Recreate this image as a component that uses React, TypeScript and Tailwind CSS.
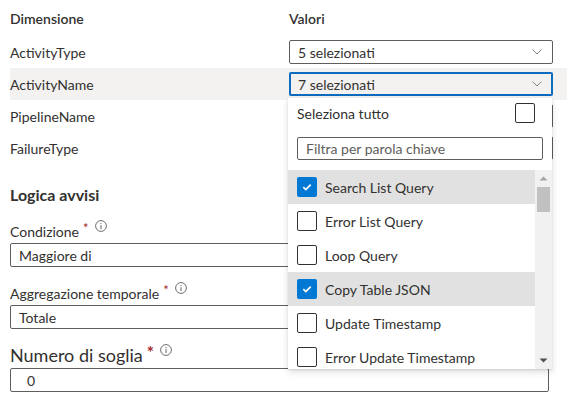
import React from 'react';

const dims = ['ActivityType', 'ActivityName', 'PipelineName', 'FailureType'];

const items = [
  { label: 'Search List Query', checked: true },
  { label: 'Error List Query', checked: false },
  { label: 'Loop Query', checked: false },
  { label: 'Copy Table JSON', checked: true },
  { label: 'Update Timestamp', checked: false },
  { label: 'Error Update Timestamp', checked: false },
];

const Chevron = () => (
  <svg width="10" height="6" viewBox="0 0 10 6" fill="none" className="shrink-0">
    <path d="M0.5 0.5 L5 5 L9.5 0.5" stroke="#8a8886" strokeWidth="1" />
  </svg>
);

const InfoIcon = () => (
  <svg width="12" height="12" viewBox="0 0 12 12" fill="none" className="ml-[6px] -translate-y-[5px] shrink-0">
    <circle cx="6" cy="6" r="5.4" stroke="#605e5c" strokeWidth="0.9" />
    <path d="M6 5.2 V9" stroke="#605e5c" strokeWidth="1" />
    <circle cx="6" cy="3.6" r="0.6" fill="#605e5c" />
  </svg>
);

const Required = ({ big }: { big?: boolean }) => (
  <span
    className={
      big
        ? 'text-[#a4262c] text-[17px] font-bold leading-none ml-[4px] -translate-y-[3px]'
        : 'text-[#a4262c] text-[13px] leading-none ml-[4px] -translate-y-[3px]'
    }
  >
    *
  </span>
);

const Checkbox = ({ checked }: { checked: boolean }) =>
  checked ? (
    <div className="w-5 h-5 rounded-[2px] bg-[#0078d4] flex items-center justify-center shrink-0">
      <svg width="20" height="20" viewBox="0 0 20 20" fill="none">
        <path d="M6.3 10.2 L8.8 12.6 L13.7 7.6" stroke="white" strokeWidth="1.6" />
      </svg>
    </div>
  ) : (
    <div className="w-5 h-5 rounded-[2px] border border-[#323130] shrink-0" />
  );

const Select = ({ value, focused }: { value: string; focused?: boolean }) => (
  <div
    className={
      focused
        ? 'w-[264px] h-6 rounded-[2px] border-2 border-[#0f6cbd] flex items-center justify-between pl-[7px] pr-[9px]'
        : 'w-[264px] h-6 rounded-[2px] border border-[#605e5c] flex items-center justify-between pl-[8px] pr-[10px]'
    }
  >
    <span>{value}</span>
    <Chevron />
  </div>
);

const DropdownPanel = () => (
  <div className="absolute left-[-1px] top-[26px] w-[264px] bg-white z-10 shadow-[0_3.2px_7.2px_rgba(0,0,0,0.13),0_0.6px_1.8px_rgba(0,0,0,0.11)]">
    <div className="flex items-center justify-between pl-[9px] pr-[17px] h-[30px]">
      <span>Seleziona tutto</span>
      <Checkbox checked={false} />
    </div>
    <div className="px-[9px] pt-[9px] pb-[10px]">
      <div className="h-[23px] border border-[#605e5c] rounded-[2px] flex items-center pl-[8px] text-[#605e5c]">
        Filtra per parola chiave
      </div>
    </div>
    <div className="flex h-[199px] overflow-hidden">
      <div className="w-[247px]">
        {items.map((it) => (
          <div
            key={it.label}
            className={`h-[34px] flex items-center gap-2 pl-[9px] ${it.checked ? 'bg-[#e1e1e1]' : ''}`}
          >
            <Checkbox checked={it.checked} />
            <span>{it.label}</span>
          </div>
        ))}
      </div>
      <div className="w-[17px] bg-[#f1f1f1] flex flex-col">
        <div className="h-[17px] flex items-center justify-center">
          <svg width="9" height="5" viewBox="0 0 9 5">
            <path d="M0.5 4.5 L4.5 0.5 L8.5 4.5 Z" fill="#a3a3a3" />
          </svg>
        </div>
        <div className="mx-[2px] h-[25px] bg-[#c1c1c1]" />
        <div className="flex-1" />
        <div className="h-[17px] flex items-center justify-center">
          <svg width="9" height="5" viewBox="0 0 9 5">
            <path d="M0.5 0.5 L4.5 4.5 L8.5 0.5 Z" fill="#505050" />
          </svg>
        </div>
      </div>
    </div>
  </div>
);

const Field = ({ label, value }: { label: string; value: string }) => (
  <div>
    <div className="h-5 flex items-center">
      <span>{label}</span>
      <Required />
      <InfoIcon />
    </div>
    <div className="mt-[2px] w-[539px] h-6 border border-[#605e5c] rounded-[2px] flex items-center pl-[8px]">
      {value}
    </div>
  </div>
);

export default function App() {
  return (
    <div className="w-[585px] h-[395px] overflow-hidden bg-white text-[#323130] text-[14px] font-['Lato','Noto_Sans',sans-serif] px-[10px]">
      <div className="w-[557px]">
        <div className="h-9 flex items-center font-semibold">
          <div className="w-[279px]">Dimensione</div>
          <div>Valori</div>
        </div>
        {dims.map((d, i) => (
          <div key={d} className={`h-8 flex items-center ${i === 1 ? 'bg-[#f3f2f1]' : ''}`}>
            <div className="w-[279px]">{d}</div>
            <div className="relative">
              <Select
                value={i === 0 ? '5 selezionati' : i === 1 ? '7 selezionati' : ''}
                focused={i === 1}
              />
              {i === 1 && <DropdownPanel />}
            </div>
          </div>
        ))}
      </div>

      <div className="mt-5 text-[16px] font-bold leading-[22px]">Logica avvisi</div>

      <div className="mt-[15px]">
        <Field label="Condizione" value="Maggiore di" />
      </div>
      <div className="mt-4">
        <Field label="Aggregazione temporale" value="Totale" />
      </div>

      <div className="mt-[14px]">
        <div className="h-6 flex items-center text-[18px]">
          <span>Numero di soglia</span>
          <Required big />
          <InfoIcon />
        </div>
        <div className="mt-px w-[539px] h-6 border border-[#605e5c] rounded-[2px] flex items-center pl-[16px]">
          0
        </div>
      </div>
    </div>
  );
}
